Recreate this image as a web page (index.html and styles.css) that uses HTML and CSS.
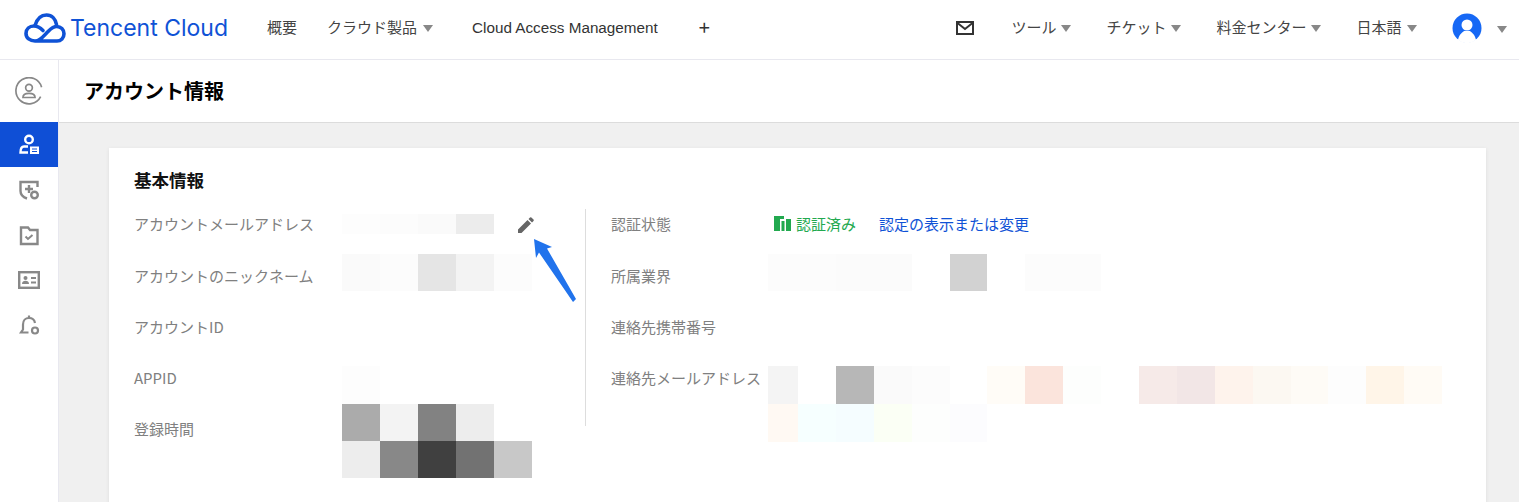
FILE: index.html
```html
<!DOCTYPE html>
<html lang="ja">
<head>
<meta charset="utf-8">
<title>アカウント情報</title>
<link rel="stylesheet" href="styles.css">
</head>
<body>
<header class="topbar">
  <a class="logo">
    <svg class="logo-mark" viewBox="0 0 42 30" width="42" height="30" fill="none" stroke="#0f52d6" stroke-width="3.600" stroke-linecap="round">
      <path d="M11 12.500C13 6 17 2 22.500 2C28 2 31.500 6 32.500 11.500"/>
      <path d="M11.500 28H33C37 28 40 24.800 40 20.800C40 16.500 36.800 13.500 32.800 13.500C28.500 13.500 26.500 16 23.500 19C20 22.500 16.500 28 11 28C6 28 2 25 2 20.500C2 16 5.500 13 10 13C14 13 16.500 15 19 17.500"/>
    </svg>
    <span class="logo-text">Tencent Cloud</span>
  </a>
  <nav class="nav nav-main">
    <span class="nav-item">概要</span>
    <span class="nav-item nav-wide">クラウド製品<i class="caret"></i></span>
    <span class="nav-dark">Cloud Access Management</span>
    <span class="nav-plus">+</span>
  </nav>
  <nav class="nav nav-right">
    <svg class="mail" viewBox="0 0 18 14" width="18" height="14" fill="none" stroke="#333" stroke-width="2"><rect x="1" y="1" width="16" height="12"/><path d="M1.500 2L9 8l7.500-6"/></svg>
    <span class="nav-item">ツール<i class="caret"></i></span>
    <span class="nav-item">チケット<i class="caret"></i></span>
    <span class="nav-item">料金センター<i class="caret"></i></span>
    <span class="nav-item">日本語<i class="caret"></i></span>
    <span class="user">
      <svg viewBox="0 0 30 30" width="30" height="30"><circle cx="15" cy="15" r="14.500" fill="#1668f5"/><circle cx="15" cy="12" r="5.500" fill="#fff"/><path d="M6 27c1-6 5-8 6-9h6c1 1 5 3 6 9a14.500 14.500 0 0 1-18 0z" fill="#fff"/></svg>
      <i class="caret"></i>
    </span>
  </nav>
</header>
<div class="shell">
  <aside class="side">
    <div class="side-top">
      <svg viewBox="0 0 30 30" width="28" height="28" fill="none" stroke="#888" stroke-width="1.800"><path d="M27.500 21A14 14 0 1 1 28.500 11"/><circle cx="15" cy="11.500" r="3.600"/><path d="M8.500 22c0-3 2.500-4.500 6.500-4.500s6.500 1.500 6.500 4.500z"/></svg>
    </div>
    <div class="side-item side-active">
      <svg viewBox="0 0 22 22" width="22" height="22" fill="none" stroke="#fff" stroke-width="2.400"><circle cx="11" cy="5.500" r="3.800"/><path d="M10 12.500H6C4 12.500 2.500 14.500 2.500 18.500H10"/><rect x="12" y="12.500" width="9" height="7.500" fill="#fff" stroke="none"/><path d="M14 15h5M14 17.500h5" stroke="#0f4fd6" stroke-width="1"/></svg>
    </div>
    <div class="side-item">
      <svg viewBox="0 0 22 22" width="22" height="22" fill="none" stroke="#888" stroke-width="2.400"><path d="M19.500 8V3H2.500v9c0 4 3.500 6.500 6.500 7.500"/><path d="M11 6v8M7 10h8"/><circle cx="16.500" cy="16" r="3.300"/></svg>
    </div>
    <div class="side-item">
      <svg viewBox="0 0 22 22" width="22" height="22" fill="none" stroke="#888" stroke-width="2.400"><path d="M3 3.500h7l2 2.500h7.500v14H3z"/><path d="M7.500 12.500l2.500 2.500 4.500-4" stroke-width="2"/></svg>
    </div>
    <div class="side-item">
      <svg viewBox="0 0 22 22" width="22" height="22" fill="none" stroke="#888" stroke-width="2.400"><rect x="1.200" y="3.200" width="19.600" height="15.600"/><circle cx="7.500" cy="9" r="2" fill="#888" stroke="none"/><path d="M4 15c0-2.300 1.500-3.300 3.500-3.300S11 12.700 11 15z" fill="#888" stroke="none"/><path d="M13 9h5M13 13.500h5" stroke-width="1.800"/></svg>
    </div>
    <div class="side-item">
      <svg viewBox="0 0 22 22" width="22" height="22" fill="none" stroke="#888" stroke-width="2.200"><path d="M10.500 18.500H3L5 15.500V10.500C5 6.500 7.500 4 11 4C14 4 16.500 6 17 9"/><path d="M11 1.500V4"/><circle cx="17" cy="16.500" r="3"/></svg>
    </div>
  </aside>
  <main class="main">
    <div class="page-title">アカウント情報</div>
    <div class="content">
      <section class="card">
        <h2 class="card-title">基本情報</h2>
        <div class="columns">
          <div class="col col-left">
            <div class="row row-first">
              <div class="label label-left">アカウントメールアドレス</div>
              <div class="mosaic mosaic-short">
                <b class="m m-fd"></b><b class="m m-fc"></b><b class="m m-fa"></b><b class="m m-ec"></b>
              </div>
              <svg class="pencil" viewBox="0 0 16 16" width="16" height="16" fill="#666"><path d="M0 16v-3.500L9.500 3 13 6.500 3.500 16zM10.500 2l1.500-1.500a1 1 0 0 1 1.400 0l2.100 2.100a1 1 0 0 1 0 1.400L14 5.500z"/></svg>
            </div>
            <div class="row">
              <div class="label label-left">アカウントのニックネーム</div>
              <div class="mosaic mosaic-mid">
                <b class="m m-fa"></b><b class="m m-fc"></b><b class="m m-e5"></b><b class="m m-f3"></b><b class="m m-fc"></b>
              </div>
            </div>
            <div class="row">
              <div class="label label-left">アカウントID</div>
            </div>
            <div class="row">
              <div class="label label-left">APPID</div>
              <div class="mosaic mosaic-tall"><b class="m m-fd"></b></div>
            </div>
            <div class="row">
              <div class="label label-left">登録時間</div>
              <div class="mosaic mosaic-flush">
                <b class="m m-ab"></b><b class="m m-f3"></b><b class="m m-82"></b><b class="m m-ed"></b><b class="m"></b>
                <b class="m m-ed"></b><b class="m m-88"></b><b class="m m-40"></b><b class="m m-72"></b><b class="m m-c8"></b>
              </div>
            </div>
          </div>
          <div class="col col-right">
            <div class="row row-first">
              <div class="label label-right">認証状態</div>
              <div class="status">
                <svg viewBox="0 0 17 15" width="17" height="15" fill="#22a94f"><path d="M0 0H10V3H6V15H0ZM7.500 5H10.500V15H7.500ZM12 3H17V15H12Z"/></svg>
                <span class="status-ok">認証済み</span>
                <a class="link">認定の表示または変更</a>
              </div>
            </div>
            <div class="row">
              <div class="label label-right">所属業界</div>
              <div class="mosaic mosaic-mid mosaic-wide">
                <b class="m m-narrow m-fc"></b><b class="m m-fc"></b><b class="m m-fb"></b><b class="m m-fb"></b><b class="m"></b><b class="m m-d2"></b><b class="m"></b><b class="m m-fc"></b><b class="m m-fc"></b>
              </div>
            </div>
            <div class="row">
              <div class="label label-right">連絡先携帯番号</div>
            </div>
            <div class="row">
              <div class="label label-right">連絡先メールアドレス</div>
              <div class="mosaic mosaic-tall mosaic-wide">
                <b class="m m-narrow m-f4"></b><b class="m"></b><b class="m m-b7"></b><b class="m m-fa"></b><b class="m m-fc"></b><b class="m"></b><b class="m c-fffcf7"></b><b class="m c-fbe4dc"></b><b class="m c-fdfefd"></b><b class="m"></b>
                <b class="m c-f6eae8"></b><b class="m c-f2e6e6"></b><b class="m c-fef3ec"></b><b class="m c-fcf8f2"></b><b class="m c-fefbf6"></b><b class="m m-fd"></b><b class="m c-fff5e8"></b><b class="m c-fffbf5"></b>
                <b class="m m-narrow c-fff9f3"></b><b class="m c-f6ffff"></b><b class="m c-f5fdff"></b><b class="m c-fbfff5"></b><b class="m c-fdfefd"></b><b class="m c-fcfcfe"></b>
              </div>
            </div>
          </div>
        </div>
        <svg class="arrow" viewBox="0 0 44 66" width="44" height="66" fill="#2173ec"><path d="M1 1L19 9 14 10.500 43 61 40 64 6 14.500 3 20z"/></svg>
      </section>
    </div>
  </main>
</div>
</body>
</html>
```
FILE: styles.css
```css
* { box-sizing: border-box; }
html, body { margin: 0; height: 100%; overflow: hidden; }
body {
  font-family: "Noto Sans CJK JP", "Liberation Sans", sans-serif;
  font-size: 15px;
  color: #333;
  background: #fff;
}
.topbar {
  display: flex;
  align-items: center;
  height: 60px;
  padding: 0 12.500px 4px 24px;
  border-bottom: 1px solid #e8e8ef;
}
.logo { display: flex; align-items: center; gap: 4px; }
.logo-mark { display: block; }
.logo-text {
  font-family: Inter, "Liberation Sans", sans-serif;
  font-size: 23px;
  color: #0f52d6;
  white-space: nowrap;
}
.nav { display: flex; align-items: center; white-space: nowrap; }
.nav-main { margin-left: 39px; gap: 30px; }
.nav-right { margin-left: auto; gap: 35px; }
.nav-item { display: flex; align-items: center; gap: 5px; color: #444; line-height: 20px; padding-bottom: 2px; }
.nav-wide { gap: 6px; }
.nav-dark {
  font-family: "Liberation Sans", sans-serif;
  font-size: 15.250px;
  line-height: 20px;
  color: #333;
  margin-left: 9px;
}
.nav-plus { font-size: 20px; line-height: 20px; color: #333; margin-left: 11px; padding-bottom: 2px; }
.caret {
  display: inline-block;
  width: 0;
  height: 0;
  margin-top: 4px;
  border-left: 5.500px solid transparent;
  border-right: 5.500px solid transparent;
  border-top: 7px solid #888;
}
.mail { display: block; margin-right: 2px; }
.user { display: flex; align-items: center; gap: 15px; }
.user svg { display: block; }
.shell { display: flex; height: 442px; }
.side { width: 59px; flex: none; border-right: 1px solid #e8e8ef; background: #fff; }
.side-top { height: 62px; display: flex; align-items: center; justify-content: center; }
.side-item { height: 45px; display: flex; align-items: center; justify-content: center; }
.side-active { background: #0f4fd6; }
.main { flex: 1; min-width: 0; display: flex; flex-direction: column; }
.page-title {
  height: 63px;
  padding-left: 25px;
  flex: none;
  font-size: 20px;
  font-weight: 700;
  line-height: 61px;
  color: #000;
  border-bottom: 1px solid #dcdcdc;
}
.content { flex: 1; background: #f0f0f0; padding: 25px 33px 0 50px; overflow: hidden; }
.card {
  position: relative;
  height: 400px;
  background: #fff;
  padding: 20px 25px 0;
  box-shadow: 0 1px 4px rgba(0, 0, 0, .08);
}
.card-title {
  margin: 0;
  height: 31px;
  font-size: 17.500px;
  font-weight: 700;
  line-height: 24px;
  color: #111;
}
.columns { display: flex; }
.col-left { width: 452px; flex: none; position: relative; }
.col-left::after {
  content: "";
  position: absolute;
  right: 0;
  top: 10px;
  height: 217px;
  width: 1px;
  background: #ddd;
}
.col-right { padding-left: 25px; flex: 1; min-width: 0; }
.row { display: flex; align-items: flex-start; min-height: 51px; }
.label { flex: none; line-height: 51px; color: #808080; white-space: nowrap; }
.row-first .label { line-height: 49px; }
.label-left { width: 208px; }
.label-right { width: 157px; }
.mosaic { display: flex; flex-wrap: wrap; width: 190px; }
.m { display: block; width: 38px; height: 38px; }
.mosaic-short { margin-top: 15px; width: 152px; }
.mosaic-short .m { height: 20px; }
.mosaic-mid { margin-top: 4px; }
.mosaic-mid .m { height: 37px; }
.mosaic-tall { margin: 14px 0 -1px; }
.mosaic-flush { margin-top: 1px; }
.mosaic-flush .m { height: 37px; }
.mosaic-wide { width: 675px; }
.mosaic-wide .m { width: 37.900px; }
.mosaic-wide .m-narrow { width: 30px; }
.m-fd { background: #fdfdfd; }
.m-fc { background: #fcfcfc; }
.m-fb { background: #fbfbfb; }
.m-fa { background: #fafafa; }
.m-f4 { background: #f4f4f4; }
.m-f3 { background: #f3f3f3; }
.m-ed { background: #ededed; }
.m-ec { background: #ececec; }
.m-e5 { background: #e5e5e5; }
.m-d2 { background: #d2d2d2; }
.m-c8 { background: #c8c8c8; }
.m-b7 { background: #b7b7b7; }
.m-ab { background: #ababab; }
.m-88 { background: #888; }
.m-82 { background: #828282; }
.m-72 { background: #727272; }
.m-40 { background: #404040; }
.c-fffcf7 { background: #fffcf7; }
.c-fbe4dc { background: #fbe4dc; }
.c-fdfefd { background: #fdfefd; }
.c-f6eae8 { background: #f6eae8; }
.c-f2e6e6 { background: #f2e6e6; }
.c-fef3ec { background: #fef3ec; }
.c-fcf8f2 { background: #fcf8f2; }
.c-fefbf6 { background: #fefbf6; }
.c-fff5e8 { background: #fff5e8; }
.c-fffbf5 { background: #fffbf5; }
.c-fff9f3 { background: #fff9f3; }
.c-f6ffff { background: #f6ffff; }
.c-f5fdff { background: #f5fdff; }
.c-fbfff5 { background: #fbfff5; }
.c-fcfcfe { background: #fcfcfe; }
.pencil { margin: 18px 0 0 24px; flex: none; }
.status { display: flex; align-items: center; height: 49px; }
.status svg { margin: 0 5px 0 6px; flex: none; }
.status-ok { color: #22a94f; }
.link { color: #0f52d6; margin-left: 23px; }
.arrow { position: absolute; left: 424px; top: 90px; }
```
